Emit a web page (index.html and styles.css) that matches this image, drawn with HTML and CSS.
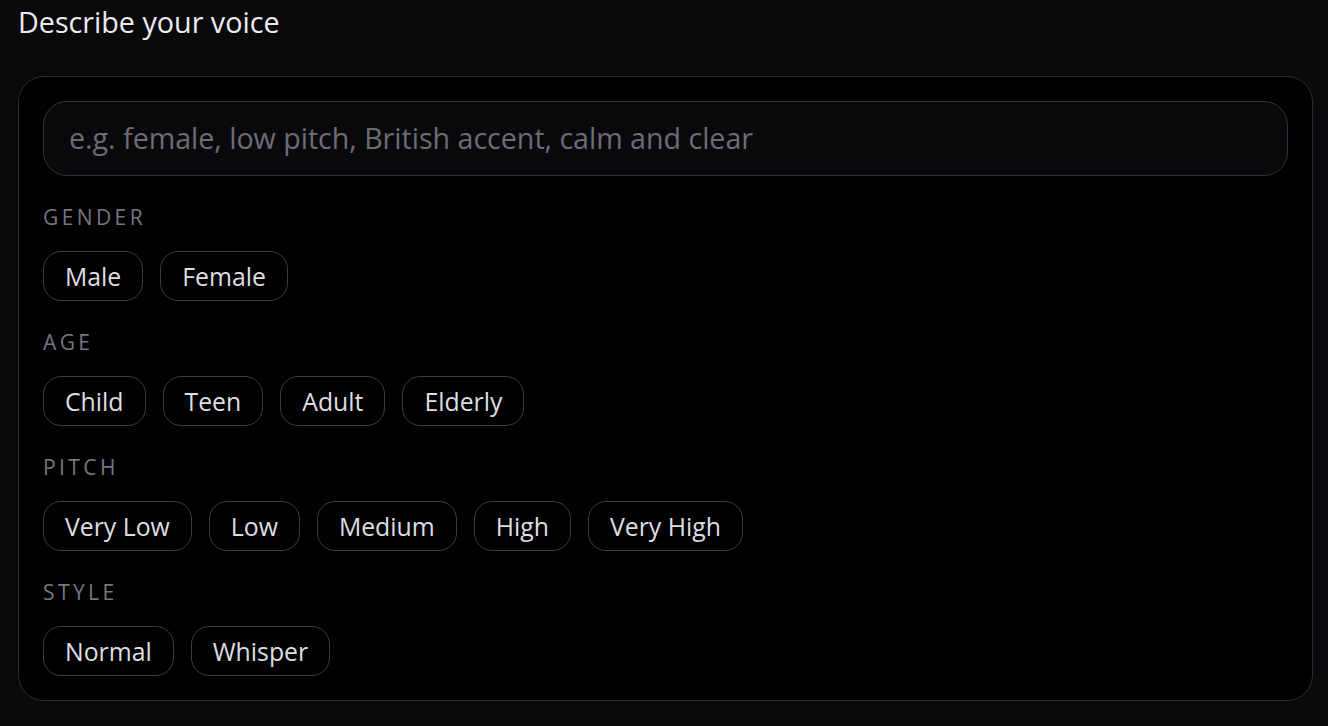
FILE: index.html
```html
<!DOCTYPE html>
<html>
<head>
<meta charset="utf-8">
<link rel="stylesheet" href="styles.css">
</head>
<body>
<div class="page">
  <h1 class="title">Describe your voice</h1>
  <div class="card">
    <div class="input">e.g. female, low pitch, British accent, calm and clear</div>
    <div class="group">
      <div class="label">GENDER</div>
      <div class="chips">
        <span class="chip">Male</span><span class="chip">Female</span>
      </div>
    </div>
    <div class="group">
      <div class="label">AGE</div>
      <div class="chips">
        <span class="chip">Child</span><span class="chip">Teen</span><span class="chip">Adult</span><span class="chip">Elderly</span>
      </div>
    </div>
    <div class="group">
      <div class="label">PITCH</div>
      <div class="chips">
        <span class="chip">Very Low</span><span class="chip">Low</span><span class="chip">Medium</span><span class="chip">High</span><span class="chip">Very High</span>
      </div>
    </div>
    <div class="group">
      <div class="label">STYLE</div>
      <div class="chips">
        <span class="chip">Normal</span><span class="chip">Whisper</span>
      </div>
    </div>
  </div>
</div>
</body>
</html>
```
FILE: styles.css
```css
html, body {
  margin: 0;
  padding: 0;
  background: #09090c;
  height: 100%;
  overflow: hidden;
}
body {
  font-family: "Open Sans", "Noto Sans", sans-serif;
  color: #e6e6e9;
}
.page {
  padding: 0 15px 0 18px;
}
.title {
  margin: 0;
  font-size: 28.7px;
  font-weight: 400;
  line-height: 44px;
  color: #ebebed;
}
.card {
  margin-top: 32px;
  background: #000;
  border: 1px solid #2c2c30;
  border-radius: 26px;
  padding: 24px;
  display: flex;
  flex-direction: column;
}
.input {
  box-sizing: border-box;
  height: 75px;
  border: 1.5px solid #323237;
  border-radius: 24px;
  background: #09090c;
  display: flex;
  align-items: center;
  padding: 0 0 3px 25px;
  font-size: 28.6px;
  color: #6c6c74;
}
.group {
  display: flex;
  flex-direction: column;
}
.label {
  margin-top: 28px;
  font-size: 21px;
  line-height: 26px;
  letter-spacing: 3.4px;
  color: #76767e;
}
.chips {
  margin-top: 21px;
  display: flex;
  gap: 17px;
}
.chip {
  box-sizing: border-box;
  height: 50px;
  padding: 0 21px;
  border: 1.5px solid #3e3e43;
  border-radius: 18px;
  display: inline-flex;
  align-items: center;
  font-size: 24.8px;
  color: #dedee2;
}
```
